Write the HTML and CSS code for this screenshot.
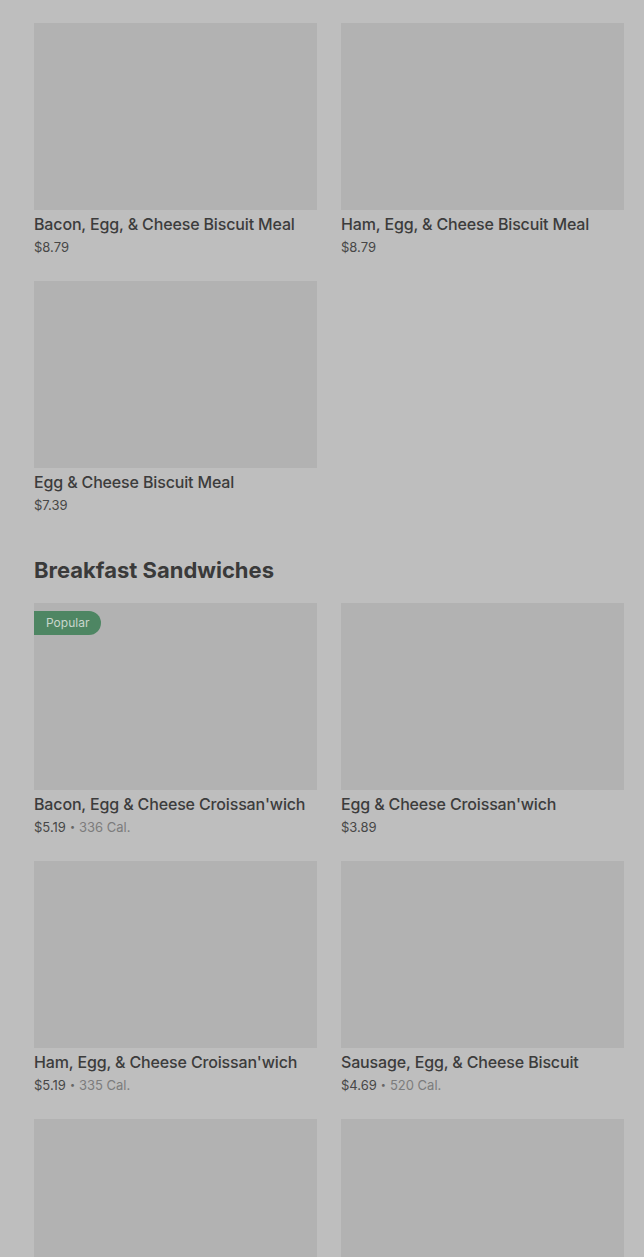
FILE: index.html
```html
<!DOCTYPE html>
<html>
<head>
<meta charset="utf-8">
<link rel="stylesheet" href="styles.css">
</head>
<body>
<div class="page">
  <section class="section">
    <div class="grid">
      <div class="card">
        <div class="thumb"></div>
        <div class="name">Bacon, Egg, &amp; Cheese Biscuit Meal</div>
        <div class="meta"><span class="price">$8.79</span></div>
      </div>
      <div class="card">
        <div class="thumb"></div>
        <div class="name">Ham, Egg, &amp; Cheese Biscuit Meal</div>
        <div class="meta"><span class="price">$8.79</span></div>
      </div>
      <div class="card">
        <div class="thumb"></div>
        <div class="name">Egg &amp; Cheese Biscuit Meal</div>
        <div class="meta"><span class="price">$7.39</span></div>
      </div>
    </div>
  </section>
  <section class="section">
    <h2 class="heading">Breakfast Sandwiches</h2>
    <div class="grid">
      <div class="card">
        <div class="thumb"><span class="badge">Popular</span></div>
        <div class="name">Bacon, Egg &amp; Cheese Croissan'wich</div>
        <div class="meta"><span class="price">$5.19</span><span class="dot">•</span><span class="cal">336 Cal.</span></div>
      </div>
      <div class="card">
        <div class="thumb"></div>
        <div class="name">Egg &amp; Cheese Croissan'wich</div>
        <div class="meta"><span class="price">$3.89</span></div>
      </div>
      <div class="card">
        <div class="thumb"></div>
        <div class="name">Ham, Egg, &amp; Cheese Croissan'wich</div>
        <div class="meta"><span class="price">$5.19</span><span class="dot">•</span><span class="cal">335 Cal.</span></div>
      </div>
      <div class="card">
        <div class="thumb"></div>
        <div class="name">Sausage, Egg, &amp; Cheese Biscuit</div>
        <div class="meta"><span class="price">$4.69</span><span class="dot">•</span><span class="cal">520 Cal.</span></div>
      </div>
      <div class="card">
        <div class="thumb"></div>
      </div>
      <div class="card">
        <div class="thumb"></div>
      </div>
    </div>
  </section>
</div>
</body>
</html>
```
FILE: styles.css
```css
html, body {
  margin: 0;
  padding: 0;
  background: #bebebe;
  height: 1257px;
  overflow: hidden;
}
body {
  font-family: Inter, "Noto Sans", "Liberation Sans", sans-serif;
  color: #3b3b3b;
}
.page {
  padding: 23px 20px 0 34px;
}
.section {
  margin-bottom: 40px;
}
.grid {
  display: grid;
  grid-template-columns: 283px 283px;
  column-gap: 24px;
  row-gap: 24px;
}
.card {
  display: flex;
  flex-direction: column;
  padding-bottom: 1px;
}
.thumb {
  position: relative;
  height: 187px;
  background: #b2b2b2;
}
.badge {
  position: absolute;
  left: 0;
  top: 8px;
  height: 24px;
  padding: 0 12px 0 12px;
  line-height: 24px;
  font-size: 12px;
  color: #c9d6cd;
  background: #4e8663;
  border-radius: 0 12px 12px 0;
}
.name {
  margin-top: 4px;
  font-size: 16px;
  font-weight: 500;
  line-height: 20px;
  letter-spacing: -0.15px;
  color: #3c3c3c;
  white-space: nowrap;
}
.meta {
  margin-top: 4px;
  font-size: 13px;
  line-height: 18px;
  display: flex;
  align-items: center;
}
.price {
  color: #474747;
}
.dot {
  color: #666;
  font-size: 9px;
  margin: 0 4px;
}
.cal {
  color: #7c7c7c;
}
.heading {
  margin: 0 0 18px 0;
  font-size: 22px;
  font-weight: 700;
  line-height: 30px;
  letter-spacing: 0;
  color: #3a3a3a;
}
```
